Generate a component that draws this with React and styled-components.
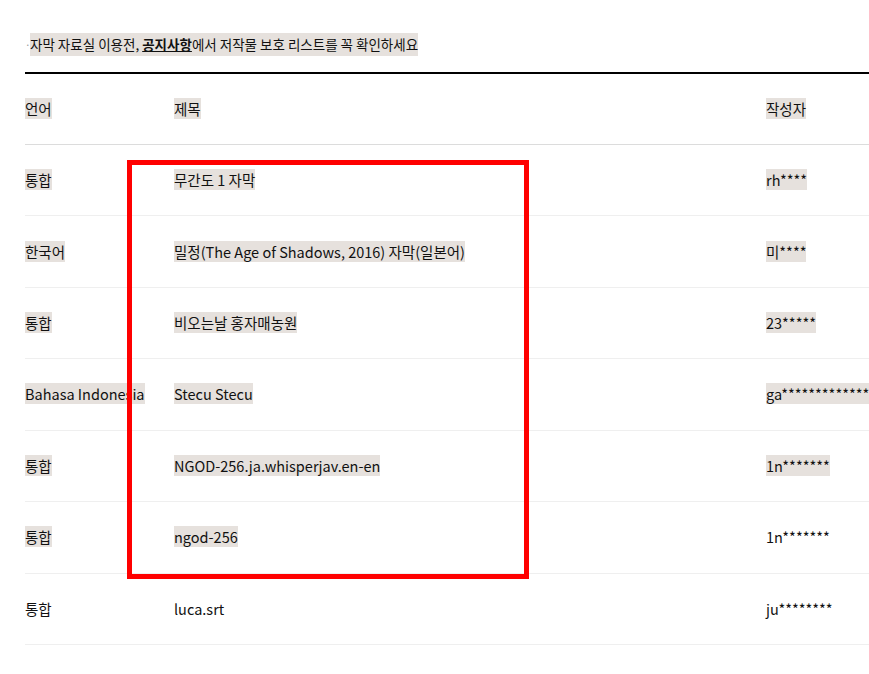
import React from "react";
import styled, { createGlobalStyle } from "styled-components";

const Global = createGlobalStyle`
  html, body { margin: 0; padding: 0; background: #fff; }
  body {
    font-family: "Noto Sans CJK KR", "Noto Sans", sans-serif;
    color: #111;
    overflow: hidden;
  }
`;

const Page = styled.div`
  position: relative;
  width: 869px;
  height: 674px;
  padding-left: 25px;
  box-sizing: border-box;
`;

const Notice = styled.p`
  margin: 0;
  padding-top: 33px;
  height: 39px;
  font-size: 13.5px;
  line-height: 23px;
  display: flex;
  align-items: flex-start;
`;

const Dot = styled.span`
  width: 5px;
  color: #999;
  font-size: 10px;
`;

const Mark = styled.span`
  background: ${(p) => (p.$on ? "#e6e1dd" : "transparent")};
  white-space: nowrap;
`;

const Link = styled.b`
  font-weight: 700;
  text-decoration: underline;
`;

const Table = styled.div`
  border-top: 2px solid #000;
  width: 844px;
`;

const Row = styled.div`
  display: grid;
  grid-template-columns: 149px 592px 1fr;
  align-items: center;
  height: ${(p) => (p.$head ? "71px" : "71.43px")};
  box-sizing: border-box;
  border-bottom: 1px solid ${(p) => (p.$head ? "#dcdcdc" : "#efefef")};
  font-size: 14.5px;
  line-height: 22px;
`;

const Cell = styled.div`
  white-space: nowrap;
  min-width: 0;
`;

const Highlight = styled.div`
  position: absolute;
  left: 127px;
  top: 160px;
  width: 402px;
  height: 419px;
  border: 5px solid #ff0000;
  box-sizing: border-box;
  pointer-events: none;
`;

const rows = [
  ["통합", "무간도 1 자막", "rh****", [1, 1, 1]],
  ["한국어", "밀정(The Age of Shadows, 2016) 자막(일본어)", "미****", [1, 1, 1]],
  ["통합", "비오는날 홍자매농원", "23*****", [1, 1, 1]],
  ["Bahasa Indonesia", "Stecu Stecu", "ga**************", [1, 1, 1]],
  ["통합", "NGOD-256.ja.whisperjav.en-en", "1n*******", [1, 1, 1]],
  ["통합", "ngod-256", "1n*******", [1, 1, 0]],
  ["통합", "luca.srt", "ju********", [0, 0, 0]],
];

export default function App() {
  return (
    <>
      <Global />
      <Page>
        <Notice>
          <Dot>·</Dot>
          <Mark $on>
            자막 자료실 이용전, <Link>공지사항</Link>에서 저작물 보호 리스트를 꼭 확인하세요
          </Mark>
        </Notice>
        <Table>
          <Row $head>
            <Cell><Mark $on>언어</Mark></Cell>
            <Cell><Mark $on>제목</Mark></Cell>
            <Cell><Mark $on>작성자</Mark></Cell>
          </Row>
          {rows.map(([lang, title, author, hl], i) => (
            <Row key={i}>
              <Cell><Mark $on={hl[0]}>{lang}</Mark></Cell>
              <Cell><Mark $on={hl[1]}>{title}</Mark></Cell>
              <Cell><Mark $on={hl[2]}>{author}</Mark></Cell>
            </Row>
          ))}
        </Table>
        <Highlight />
      </Page>
    </>
  );
}
